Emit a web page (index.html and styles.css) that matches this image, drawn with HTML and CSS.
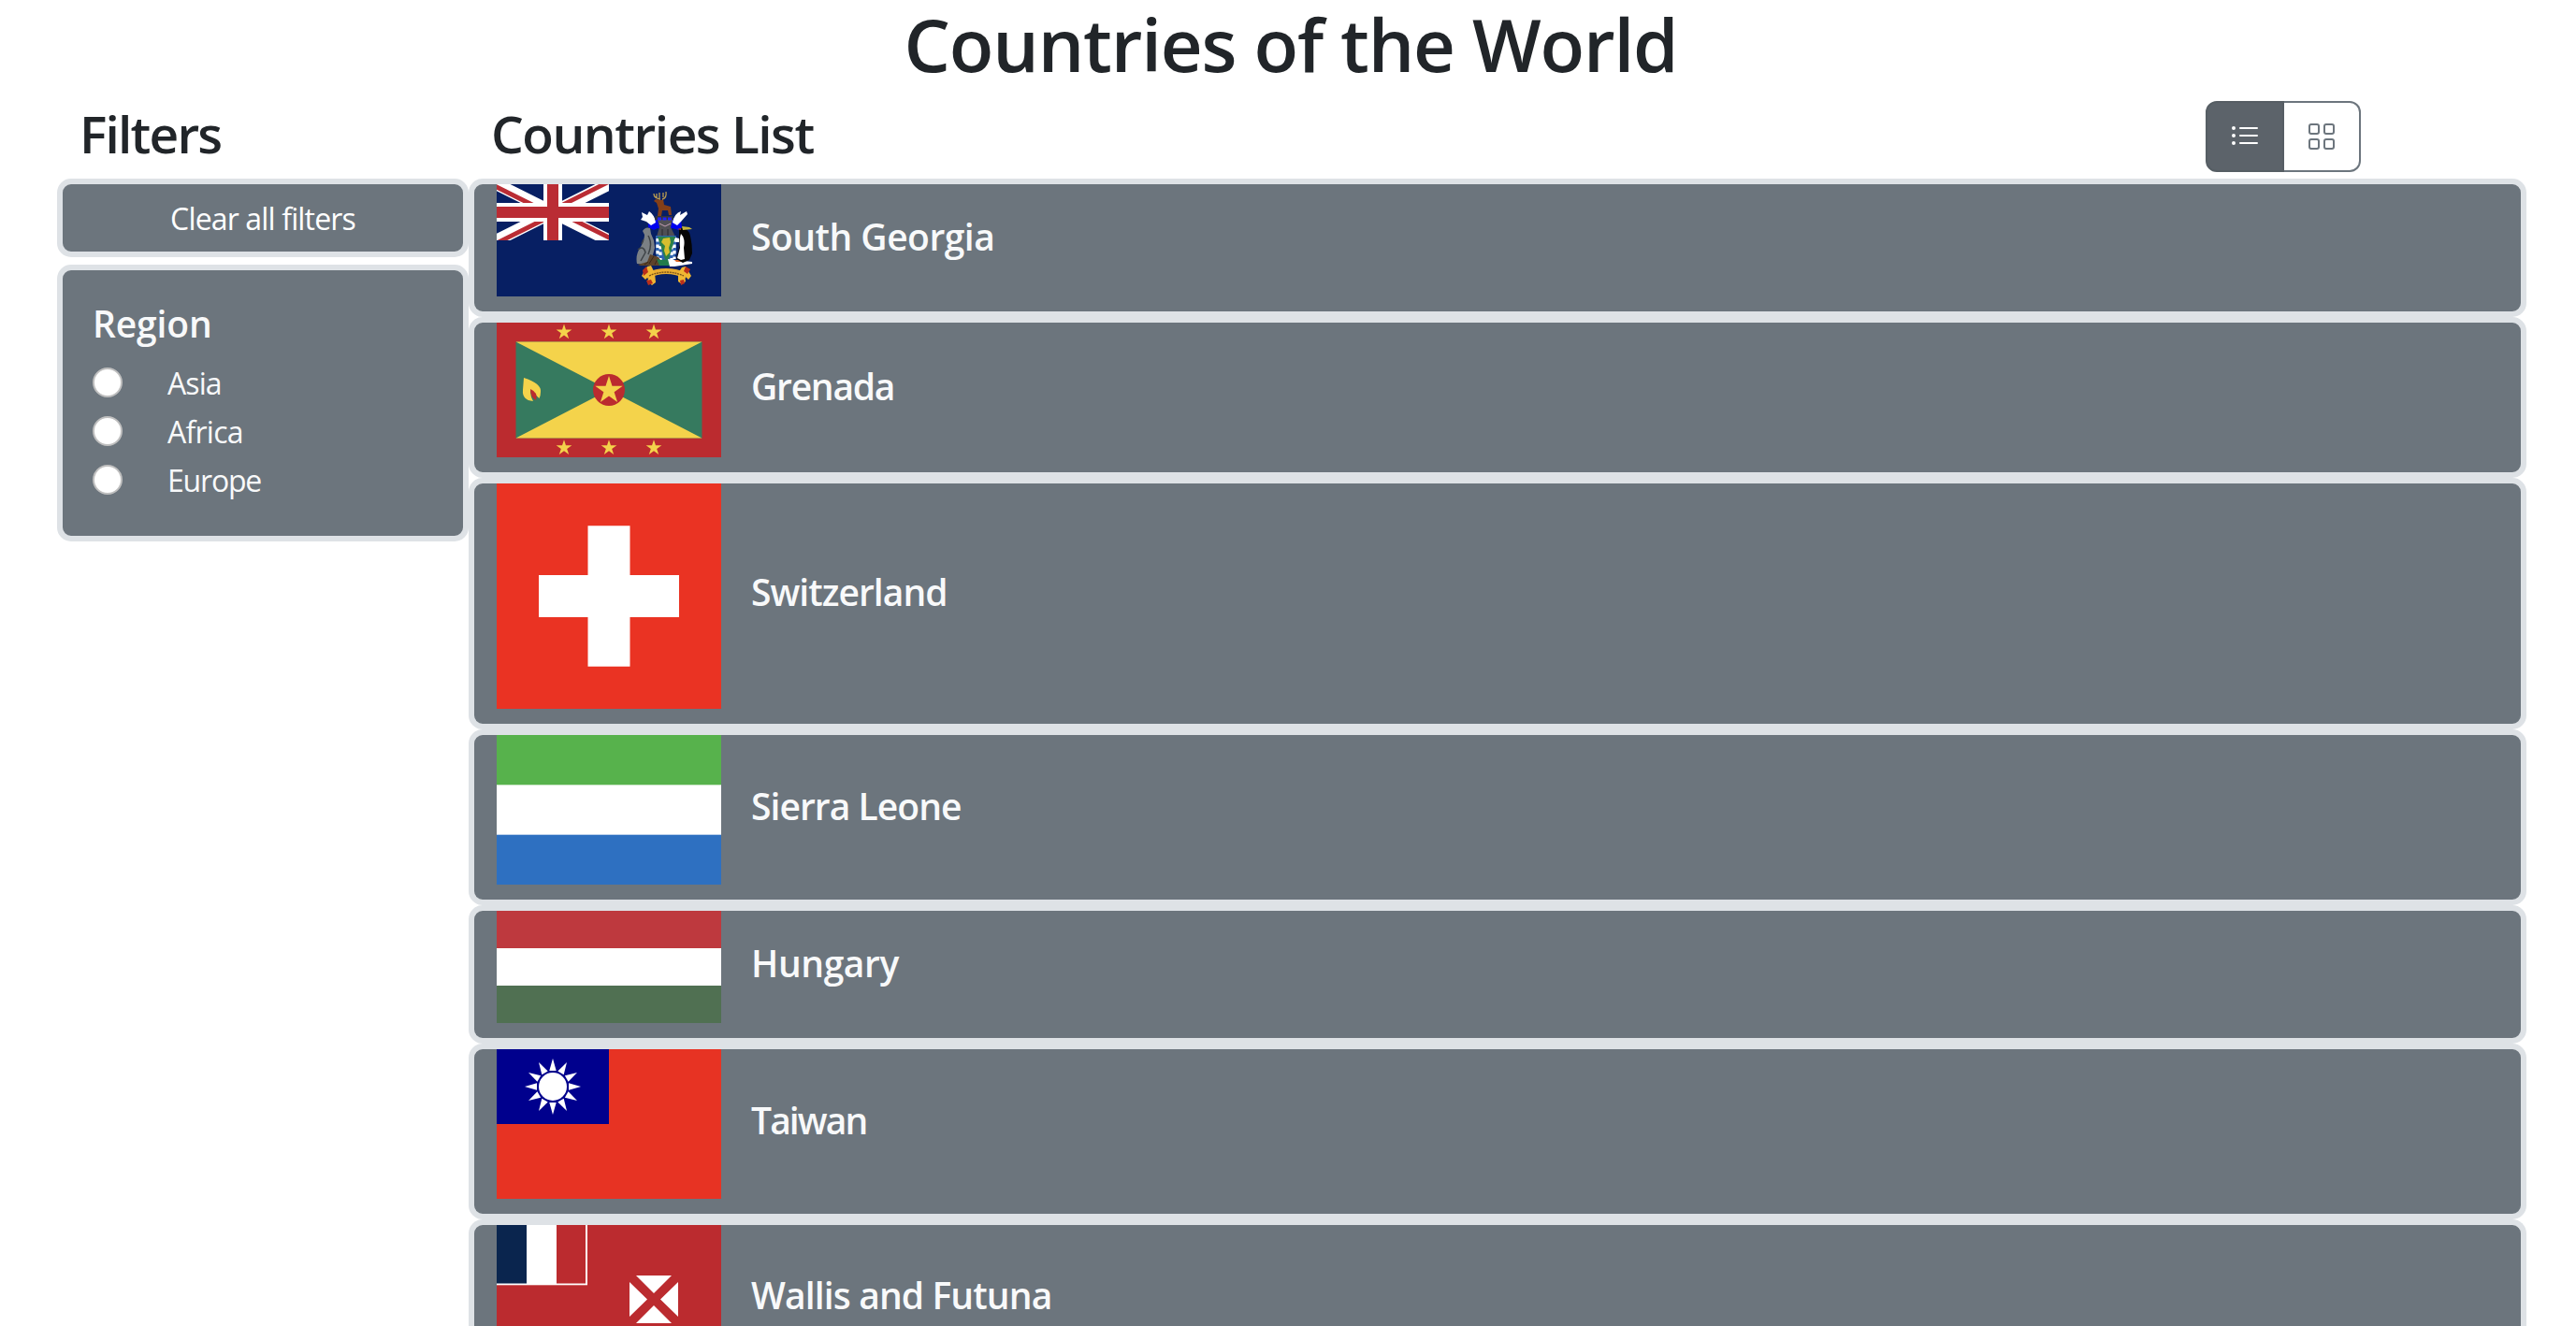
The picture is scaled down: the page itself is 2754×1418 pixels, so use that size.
FILE: index.html
```html
<!DOCTYPE html>
<html lang="en">
<head>
<meta charset="utf-8">
<title>Countries of the World</title>
<link rel="stylesheet" href="styles.css">
</head>
<body>
<h1 class="title">Countries of the World</h1>
<div class="layout">
  <aside class="sidebar">
    <h2 class="heading heading-filters">Filters</h2>
    <button class="panel clear" type="button">Clear all filters</button>
    <section class="panel region">
      <h3 class="region-title">Region</h3>
      <label class="option"><span class="radio"></span><span class="t-asia">Asia</span></label>
      <label class="option"><span class="radio"></span><span class="t-africa">Africa</span></label>
      <label class="option"><span class="radio"></span><span class="t-europe">Europe</span></label>
    </section>
  </aside>
  <main class="main">
    <header class="bar">
      <h2 class="heading heading-list">Countries List</h2>
      <div class="toggle">
        <button class="view active" type="button" aria-label="List view">
          <svg class="icon" viewBox="0 0 16 16" fill="currentColor"><path fill-rule="evenodd" d="M5 11.5a.5.5 0 0 1 .5-.5h9a.5.5 0 0 1 0 1h-9a.5.5 0 0 1-.5-.5zm0-4a.5.5 0 0 1 .5-.5h9a.5.5 0 0 1 0 1h-9a.5.5 0 0 1-.5-.5zm0-4a.5.5 0 0 1 .5-.5h9a.5.5 0 0 1 0 1h-9a.5.5 0 0 1-.5-.5zm-3 1a1 1 0 1 0 0-2 1 1 0 0 0 0 2zm0 4a1 1 0 1 0 0-2 1 1 0 0 0 0 2zm0 4a1 1 0 1 0 0-2 1 1 0 0 0 0 2z"/></svg>
        </button>
        <button class="view" type="button" aria-label="Grid view">
          <svg class="icon" viewBox="0 0 16 16" fill="currentColor"><path d="M1 2.5A1.5 1.5 0 0 1 2.5 1h3A1.5 1.5 0 0 1 7 2.5v3A1.5 1.5 0 0 1 5.5 7h-3A1.5 1.5 0 0 1 1 5.500zM2.500 2a.5.5 0 0 0-.5.5v3a.5.5 0 0 0 .5.5h3a.5.5 0 0 0 .5-.5v-3a.5.5 0 0 0-.5-.5zm6.500.5A1.500 1.500 0 0 1 10.500 1h3A1.500 1.500 0 0 1 15 2.500v3A1.500 1.500 0 0 1 13.500 7h-3A1.500 1.500 0 0 1 9 5.500zm1.500-.5a.5.5 0 0 0-.5.5v3a.5.5 0 0 0 .5.5h3a.5.5 0 0 0 .5-.5v-3a.5.5 0 0 0-.5-.5zM1 10.500A1.500 1.500 0 0 1 2.500 9h3A1.500 1.500 0 0 1 7 10.500v3A1.500 1.500 0 0 1 5.500 15h-3A1.500 1.500 0 0 1 1 13.500zm1.500-.5a.5.5 0 0 0-.5.5v3a.5.5 0 0 0 .5.5h3a.5.5 0 0 0 .5-.5v-3a.5.5 0 0 0-.5-.5zm6.500.5A1.500 1.500 0 0 1 10.500 9h3a1.500 1.500 0 0 1 1.500 1.500v3a1.500 1.500 0 0 1-1.500 1.500h-3A1.500 1.500 0 0 1 9 13.500zm1.500-.5a.5.5 0 0 0-.5.5v3a.5.5 0 0 0 .5.5h3a.5.5 0 0 0 .5-.5v-3a.5.5 0 0 0-.5-.5z"/></svg>
        </button>
      </div>
    </header>

    <article class="panel row">
      <svg class="flag h120" viewBox="0 0 240 120">
        <rect width="240" height="120" fill="#071f63"/>
        <svg width="120" height="60" viewBox="0 0 120 60">
          <path d="M0 0L120 60M120 0L0 60" stroke="#fff" stroke-width="13"/>
          <path d="M-4 1L52 29M68 23.300L124-4.700M-4 65L52 37M68 31L124 59" stroke="#ba2c34" stroke-width="4.800"/>
          <path d="M60 0V60M0 30H120" stroke="#fff" stroke-width="20"/>
          <path d="M60 0V60M0 30H120" stroke="#ba2c34" stroke-width="12"/>
        </svg>
        <!-- mantling, stag crest and helmet -->
        <path d="M162 38l5 4 5-6h16l4 6 5-4 1 8-4 3-6-2-5 2h-6l-5-2-4 2-6-3z" fill="#0000f0"/>
        <path d="M170 41l-5 3-5-4-6-2 2-3-1-5 6 3 2-4q6 4 7 12zM188 41l5 3 4-4 7-8-1-3-7 4 1-4q-7 2-9 12z" fill="#fff"/>
        <path d="M170 16l6 1 2-1 1 6 7 2 1 9h-3l-1-5h-6l-1 6h-4l1-8-2-6-3-2z" fill="#843f17"/>
        <path d="M175 16q-7-1-7-6M171 15v-5M174 15v-6M177 16q5-1 4-8M178 14v-5" fill="none" stroke="#b99c51" stroke-width="1.300"/>
        <path d="M170 34h18l1 4h-20z" fill="#343437"/>
        <path d="M172 38h16l-2 8 5 10h-20l3-10z" fill="#4f4f55"/>
        <path d="M172 37h15" stroke="#22f" stroke-width="3" stroke-dasharray="4 1.500"/>
        <path d="M174 42l6 3 6-3" fill="none" stroke="#c5a0b4"/>
        <path d="M177 48v7M183 48v7" stroke="#303035" stroke-width="1.200"/>
        <!-- seal -->
        <path d="M156 50q3-5 8-3l1 6 3 7 1 8-4 15-5 3-10-1q-2-10 4-18 4-7 4-13z" fill="#7b8084"/>
        <path d="M151 70q6-5 8 3l-5 9M162 55q5 9 0 20M157 59l-2 5" fill="none" stroke="#3e4246" stroke-width="1.500"/>
        <!-- shield -->
        <path d="M170 55h22v16q-1 11-7 16h-8q-7-7-7-16z" fill="#2d63b0"/>
        <path d="M172 58v22M190 58v22M175 66v18M187 66v18" stroke="#fff" stroke-width="3.200" stroke-dasharray="3.500 3"/>
        <path d="M172 56h19l-7 24h-4z" fill="#2c8148"/>
        <path d="M178 58l7-1 1 5-2 6 1 5-4 4-2-6 1-5-4-4z" fill="#d6bf2f"/>
        <!-- rock and ice -->
        <path d="M151 86l10-3 3-8 9 3 4 6-3 3h-20z" fill="#5d432b"/>
        <path d="M163 85l5-8M169 86l3-6M158 86l4-3" stroke="#392819"/>
        <path d="M171 80l5 1 8-1 4 7h-14z" fill="#237b4b"/>
        <path d="M183 80l8 1 18 2v2l-19 3h-5z" fill="#fff"/>
        <path d="M190 81h9l-2 2h-5z" fill="#df682b"/>
        <!-- penguin -->
        <path d="M195 48q6-3 11 4 3 9 3 22l-3 7-7 3-7-4 3-12z" fill="#050505"/>
        <path d="M197 53q5 5 3 15l1 12-4 1-4-2 3-11q-1-9 1-15zM191 57l4 1v4h-4z" fill="#fff"/>
        <path d="M198 45l8 1 3 2-10 1z" fill="#c7b53a"/>
        <path d="M193 48l4-1v2z" fill="#b74022"/>
        <!-- motto scroll -->
        <path d="M160 98q21-10 43 0" fill="none" stroke="#e9ab30" stroke-width="6"/>
        <path d="M161 88l4-1 4 8 1 10-4 3-5-4 2-6-4 4-4-4zM202 88l-4 1-4 6v9l4 3 4-3-1-6 4 4 3-4z" fill="#f0b733"/>
        <path d="M156 92l4-4 2 6-5 4zM207 91l-5-3-2 5 4 3zM160 103l5-1 2 4-5 2zM196 103l4-1 1 4-4 2z" fill="#b92f1b"/>
        <path d="M163 98q18-8 37 0" fill="none" stroke="#7a5218" stroke-width="1.300" stroke-dasharray="2 .8"/>
      </svg>
      <h5 class="name n-georgia">South Georgia</h5>
    </article>

    <article class="panel row">
      <svg class="flag h144" viewBox="0 0 240 144">
        <defs><path id="star" d="M0-10L2.245-3.090H9.511L3.633 1.180 5.878 8.090 0 3.820-5.878 8.090-3.633 1.180-9.511-3.090H-2.245z"/></defs>
        <rect width="240" height="144" fill="#bb2b2f"/>
        <rect x="20.500" y="20.500" width="199" height="103" fill="#367a5f"/>
        <path d="M20.500 20.500H219.500L20.500 123.500H219.500z" fill="#f4d34b"/>
        <circle cx="120" cy="72" r="17" fill="#bb2b2f"/>
        <g fill="#f4d34b">
          <use href="#star" transform="translate(120 72.500) scale(1.550)"/>
          <use href="#star" transform="translate(72 10.200) scale(.88)"/>
          <use href="#star" transform="translate(120 10.200) scale(.88)"/>
          <use href="#star" transform="translate(168 10.200) scale(.88)"/>
          <use href="#star" transform="translate(72 134) scale(.88)"/>
          <use href="#star" transform="translate(120 134) scale(.88)"/>
          <use href="#star" transform="translate(168 134) scale(.88)"/>
          <path d="M29 59q19 6 18 15 0 4-1.500 7L36 72q0 7 3 12-12-1-11-12z"/>
        </g>
        <path d="M36 71q9 4 6 12-6-3-6-12z" fill="#bb2b2f"/>
      </svg>
      <h5 class="name n-grenada">Grenada</h5>
    </article>

    <article class="panel row">
      <svg class="flag h241" viewBox="0 0 32 32" preserveAspectRatio="none">
        <rect width="32" height="32" fill="#ea3323"/>
        <path d="M13 6h6v7h7v6h-7v7h-6v-7H6v-6h7z" fill="#fff"/>
      </svg>
      <h5 class="name n-swiss">Switzerland</h5>
    </article>

    <article class="panel row">
      <svg class="flag h160" viewBox="0 0 9 6">
        <rect width="9" height="6" fill="#fff"/>
        <rect width="9" height="2" fill="#57b24c"/>
        <rect y="4" width="9" height="2" fill="#2e70c1"/>
      </svg>
      <h5 class="name n-sierra">Sierra Leone</h5>
    </article>

    <article class="panel row">
      <svg class="flag h120" viewBox="0 0 6 3">
        <rect width="6" height="3" fill="#fff"/>
        <rect width="6" height="1" fill="#be393e"/>
        <rect y="2" width="6" height="1" fill="#507052"/>
      </svg>
      <h5 class="name n-hungary">Hungary</h5>
    </article>

    <article class="panel row">
      <svg class="flag h160" viewBox="0 0 240 160">
        <defs><path id="ray" d="M-3.700-17L0-30 3.700-17z"/></defs>
        <rect width="240" height="160" fill="#e73323"/>
        <rect width="120" height="80" fill="#00008d"/>
        <g transform="translate(60 40)" fill="#fff">
          <circle r="15"/>
          <use href="#ray"/><use href="#ray" transform="rotate(30)"/><use href="#ray" transform="rotate(60)"/>
          <use href="#ray" transform="rotate(90)"/><use href="#ray" transform="rotate(120)"/><use href="#ray" transform="rotate(150)"/>
          <use href="#ray" transform="rotate(180)"/><use href="#ray" transform="rotate(210)"/><use href="#ray" transform="rotate(240)"/>
          <use href="#ray" transform="rotate(270)"/><use href="#ray" transform="rotate(300)"/><use href="#ray" transform="rotate(330)"/>
        </g>
      </svg>
      <h5 class="name n-taiwan">Taiwan</h5>
    </article>

    <article class="panel row last">
      <svg class="flag h108" viewBox="0 0 240 108">
        <rect width="240" height="108" fill="#bb2b2f"/>
        <rect width="97" height="64.300" fill="#fff"/>
        <rect width="32" height="62.500" fill="#0a254e"/>
        <rect x="64" width="31" height="62.500" fill="#bb2b2f"/>
        <path d="M149 54H187L168 73zM149 105H187L168 86zM142 61V98L161 79.500zM194 61V98L175 79.500z" fill="#fff"/>
      </svg>
      <h5 class="name n-wallis">Wallis and Futuna</h5>
    </article>
  </main>
</div>
</body>
</html>
```
FILE: styles.css
```css
* { box-sizing: border-box; }
html { height: 100%; overflow: hidden; }
body {
  display: flex;
  flex-direction: column;
  margin: 0;
  height: 100%;
  overflow: hidden;
  background: #fff;
  color: #212529;
  font-family: "Open Sans", "Noto Sans", sans-serif;
  font-size: 32px;
  line-height: 48px;
}
h1, h2, h3, h5 { margin: 0; font-weight: 600; white-space: nowrap; }
button { font: inherit; padding: 0; margin: 0; }

.title {
  flex: none;
  height: 96px;
  line-height: 95px;
  font-size: 78px;
  letter-spacing: -1.17px;
  text-align: center;
  padding-left: 6px;
}
.layout { flex: 1; min-height: 0; display: flex; padding: 0 53px 0 61px; }
.sidebar { width: 440px; flex: none; display: flex; flex-direction: column; }
.main { flex: 1; min-width: 0; display: flex; flex-direction: column; }

.heading { font-size: 55px; line-height: 68px; }
.heading-filters { height: 95px; padding: 13px 0 0 24px; letter-spacing: -1.8px; }
.bar { flex: none; height: 95px; display: flex; justify-content: space-between; padding: 12px 177px 0 24px; }
.heading-list { padding-top: 1px; letter-spacing: -1.5px; }

.toggle { display: flex; height: 76px; border-radius: 12px; }
.view {
  display: flex;
  align-items: center;
  justify-content: center;
  width: 82px;
  border: 2px solid #6c757d;
  border-left: 0;
  border-radius: 0 12px 12px 0;
  background: #fff;
  color: #6c757d;
}
.view.active {
  width: 84px;
  border: 2px solid #565e64;
  border-radius: 12px 0 0 12px;
  background: #5c636a;
  color: #fff;
}
.icon { width: 32px; height: 32px; display: block; }

.panel {
  flex: none;
  background: #6c757d;
  border: 6px solid #dee2e6;
  border-radius: 15px;
  color: #f8f9fa;
}
.clear {
  height: 84px;
  margin-bottom: 8px;
  padding-top: 2px;
  text-align: center;
  letter-spacing: -.85px;
  color: #fff;
}
.region { height: 296px; padding: 33px 32px; }
.region-title { font-size: 39px; line-height: 48px; margin-bottom: 16px; letter-spacing: -.15px; }
.option { display: flex; align-items: flex-start; height: 52px; }
.radio {
  flex: none;
  width: 32px;
  height: 32px;
  margin: 7px 48px 0 0;
  border: 2px solid #bfbfbf;
  border-radius: 50%;
  background: #fff;
}
.t-asia { letter-spacing: -.9px; }
.t-africa { letter-spacing: -.75px; }
.t-europe { letter-spacing: -1.2px; }

.row { display: flex; align-items: center; padding: 0 24px 16px; }
.row.last { flex: 1; align-items: flex-start; padding-bottom: 0; border-bottom: 0; border-radius: 15px 15px 0 0; }
.flag { width: 240px; flex: none; display: block; }
.h108 { height: 108px; }
.h120 { height: 120px; }
.h144 { height: 144px; }
.h160 { height: 160px; }
.h241 { height: 241px; }
.name { font-size: 39px; line-height: 48px; margin: 0 0 9px 32px; }
.last .name { margin-top: 51px; }
.n-georgia { letter-spacing: -.5px; }
.n-grenada { letter-spacing: -1.25px; }
.n-swiss { letter-spacing: -.95px; }
.n-sierra { letter-spacing: -.95px; }
.n-hungary { letter-spacing: -.4px; }
.n-taiwan { letter-spacing: -1.9px; }
.n-wallis { letter-spacing: -.87px; }
```
